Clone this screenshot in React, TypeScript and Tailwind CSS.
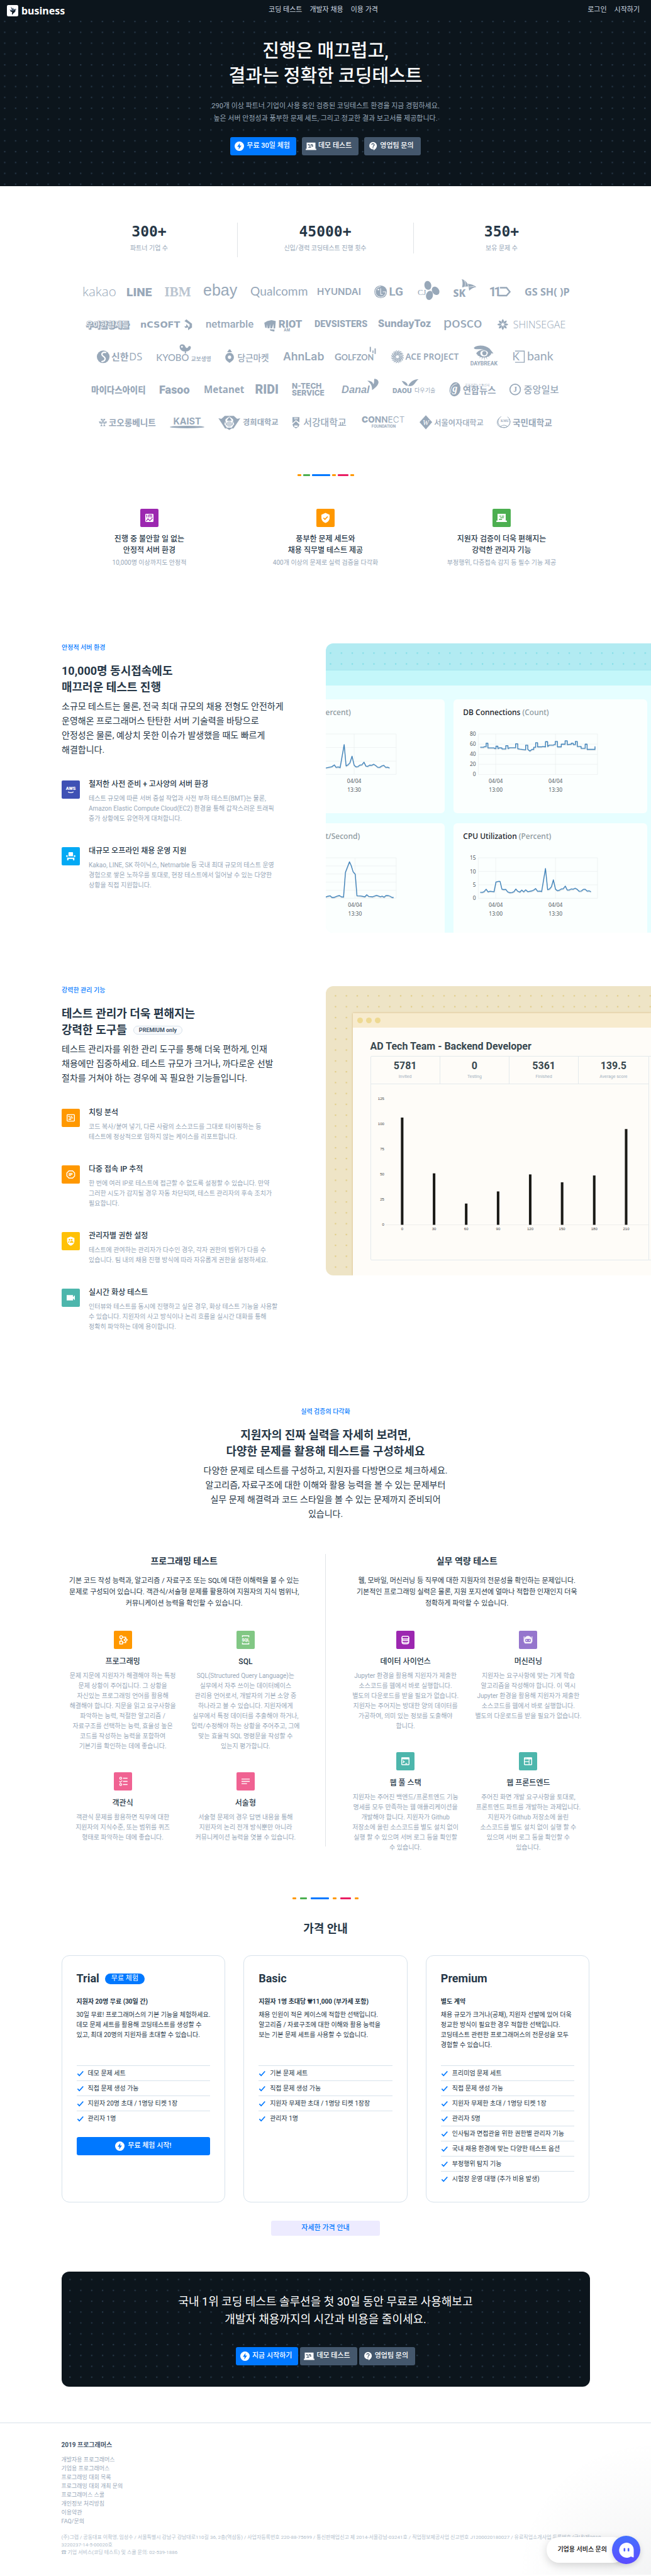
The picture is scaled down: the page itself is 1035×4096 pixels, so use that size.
import React from "react";

type Kids = { children?: React.ReactNode };

const KR = "'Noto Sans CJK KR', sans-serif";
const RB = "Roboto, 'Noto Sans CJK KR', sans-serif";

/* ---------- shared pieces ---------- */

function Dots({ id, color, x, y }: { id: string; color: string; x: number; y: number }) {
  return (
    <svg className="absolute inset-0 h-full w-full" aria-hidden="true">
      <defs>
        <pattern id={id} width="24" height="24" patternUnits="userSpaceOnUse" patternTransform={"scale(0.71875) translate(" + x + " " + y + ")"}>
          <rect x="0" y="0" width="3" height="3" fill={color} />
        </pattern>
      </defs>
      <rect width="100%" height="100%" fill={"url(#" + id + ")"} />
    </svg>
  );
}

function ColorBar({ wide }: { wide?: boolean }) {
  return (
    <div className={"flex h-[3px] justify-center " + (wide ? "gap-[6px]" : "gap-[3px]")}>
      <span className="w-[6px] rounded-[1px] bg-[#ff9800]" />
      <span className="w-[11px] rounded-[1px] bg-[#4caf50]" />
      <span className="w-[29px] rounded-[1px] bg-[#0078ff]" />
      <span className="w-[6px] rounded-[1px] bg-[#ff9800]" />
      <span className="w-[17px] rounded-[1px] bg-[#e91e63]" />
      <span className="w-[6px] rounded-[1px] bg-[#ff9800]" />
    </div>
  );
}

function Tile({ bg, children }: Kids & { bg: string }) {
  return (
    <span className={"block size-[29px] shrink-0 overflow-hidden rounded-[2px] " + bg}>
      <svg viewBox="0 0 40 40" className="h-full w-full" fill="#fff" aria-hidden="true">
        {children}
      </svg>
    </span>
  );
}

function Bolt() {
  return (
    <svg viewBox="0 0 20 20" className="size-[15px]" aria-hidden="true">
      <circle cx="10" cy="10" r="10" fill="#fff" />
      <path d="M11.4 3 5.4 11.3h3.9L8.4 17l6.1-8.3h-4z" fill="#0078ff" />
    </svg>
  );
}
function Receipt() {
  return (
    <svg viewBox="0 0 24 20" className="h-[14px] w-[17px]" fill="#fff" aria-hidden="true">
      <path d="M2 1h20v14h2v3H0v-3h2z" />
      <path d="M5 5h4v2H5zM11 5h5v2h-5zM8 8h3v2H8zM13 8h4v2h-4zM6 11h6v2H6z" fill="#44576c" />
    </svg>
  );
}
function Ask() {
  return (
    <svg viewBox="0 0 20 22" className="h-[15px] w-[14px]" aria-hidden="true">
      <path d="M10 1a9 9 0 0 1 9 9c0 5-4 8.500-7.500 11v-2.500H10A8.700 8.700 0 0 1 10 1z" fill="#fff" />
      <path d="M7.200 7.800a2.800 2.800 0 1 1 4.200 2.400c-.9.600-1.400 1-1.400 2.100" fill="none" stroke="#44576c" strokeWidth="1.900" />
      <rect x="9" y="13.600" width="2" height="2" fill="#44576c" />
    </svg>
  );
}

function Actions({ first, gap }: { first: string; gap: string }) {
  return (
    <div className={"flex justify-center " + gap}>
      <button type="button" className="flex h-[29px] items-center gap-[4px] rounded-[3px] bg-[#0078ff] px-[7px] pr-[10px] text-[11px] font-medium text-white">
        <Bolt />
        {first}
      </button>
      <button type="button" className="flex h-[29px] items-center gap-[3px] rounded-[3px] bg-[#44576c] pr-[11px] pl-[6px] text-[11px] font-medium text-white">
        <Receipt />
        데모 테스트
      </button>
      <button type="button" className="flex h-[29px] items-center gap-[4px] rounded-[3px] bg-[#44576c] pr-[11px] pl-[7px] text-[11px] font-medium text-white">
        <Ask />
        영업팀 문의
      </button>
    </div>
  );
}

/* ---------- partner logos ---------- */

function Logo({ w, label, children }: Kids & { w: number; label: string }) {
  return (
    <svg viewBox={"0 0 " + w + " 150"} width={Math.round(w * 0.24)} height={36} className="shrink overflow-visible" fill="#98a8b9" role="img" aria-label={label}>
      {children}
    </svg>
  );
}

function T({ x = 0, y, s, f = RB, b = 700, mid, italic, fill, children }: Kids & { x?: number; y: number; s: number; f?: string; b?: number; mid?: boolean; italic?: boolean; fill?: string }) {
  return (
    <text x={x} y={y} fontSize={s} fontFamily={f} fontWeight={b} textAnchor={mid ? "middle" : "start"} fontStyle={italic ? "italic" : "normal"} fill={fill}>
      {children}
    </text>
  );
}

const petals = [0, 45, 90, 135, 180, 225, 270, 315];
const blades = [0, 22, 45, 67, 90, 112, 135, 157, 180, 202, 225, 247, 270, 292, 315, 337];
const rays = [-80, -55, -30, -5, 20, 45, 70, 95];

function Partners() {
  const row = "flex h-9 items-center justify-center gap-[22px]";
  return (
    <div className="mx-auto mt-[37px] flex w-full max-w-[840px] flex-col gap-4">
      <div className={row}>
        <Logo w={205} label="kakao"><T y={103} s={86} f="'Open Sans'" b={300}>kakao</T></Logo>
        <Logo w={158} label="LINE"><T x={-4} y={103} s={80} b={900}>LINE</T></Logo>
        <Logo w={163} label="IBM">
          <T x={-2} y={106} s={88} f="'Liberation Serif'" b={700}>IBM</T>
          {[52, 61, 70, 79, 88, 97].map((y) => <rect key={y} x="-4" y={y} width="180" height="3" fill="#fff" />)}
        </Logo>
        <Logo w={220} label="ebay"><T y={100} s={104} f="'Liberation Sans'" b={400}>ebay</T></Logo>
        <Logo w={350} label="Qualcomm"><T y={98} s={80} f="Lato" b={400}>Qualcomm</T></Logo>
        <Logo w={288} label="HYUNDAI"><T y={96} s={63} f="Inter" b={600}>HYUNDAI</T></Logo>
        <Logo w={195} label="LG">
          <circle cx="42" cy="75" r="42" />
          <path d="M42 40A35 35 0 1 0 77 75H56M42 52V93H56" fill="none" stroke="#fff" strokeWidth="4" />
          <circle cx="27" cy="60" r="5" fill="#fff" />
          <T x={98} y={102} s={78}>LG</T>
        </Logo>
        <Logo w={147} label="CJ">
          <T y={94} s={54} f="'Liberation Serif'" b={400}>CJ</T>
          <ellipse cx="68" cy="32" rx="23" ry="30" transform="rotate(-12 68 32)" />
          <ellipse cx="120" cy="68" rx="23" ry="30" transform="rotate(-35 120 68)" />
          <ellipse cx="79" cy="99" rx="23" ry="31" transform="rotate(15 79 99)" />
        </Logo>
        <Logo w={150} label="SK">
          <T x={-2} y={107} s={66} f="'Noto Sans'" b={800}>SK</T>
          <path d="M55-9Q82 0 92 22Q130 25 151 43Q125 48 104 68Q105 50 96 40Q78 38 57 46Q64 15 55-9Z" />
          <path d="M70 0Q86 18 74 44M94 24Q100 38 98 44L140 38" fill="none" stroke="#fff" strokeWidth="3" />
        </Logo>
        <Logo w={138} label="11번가">
          <T x={-6} y={105} s={84}>1</T>
          <T x={26} y={105} s={84}>1</T>
          <path d="M66 48H110L132 75L110 100H56" fill="none" stroke="#98a8b9" strokeWidth="10" />
        </Logo>
        <Logo w={293} label="GS SHOP"><T y={100} s={68} f="'Noto Sans'" b={700}>GS SH( )P</T></Logo>
      </div>

      <div className={row}>
        <Logo w={268} label="우아한형제들">
          <text x="2" y="100" fontSize="52" fontFamily={KR} fontWeight="900" fill="#98a8b9" stroke="#98a8b9" strokeWidth="8">우아한형제들</text>
          <text x="-2" y="95" fontSize="52" fontFamily={KR} fontWeight="900" fill="#fff" stroke="#98a8b9" strokeWidth="2">우아한형제들</text>
        </Logo>
        <Logo w={342} label="NCSOFT">
          <T y={94} s={60} f="'DejaVu Sans'">nCSOFT</T>
          <path d="M306 41L343 70V95L317 113V98L327 88V74L306 60L293 52ZM306 72L322 93L300 98L292 88L304 86Z" />
        </Logo>
        <Logo w={296} label="netmarble"><T y={95} s={70} f="Roboto" b={500}>netmarble</T></Logo>
        <Logo w={240} label="RIOT AM">
          <path d="M0 64L20 52L48 46L76 52L72 100L62 102L60 70L52 100H40L38 72L34 100H22L18 74L16 98L6 96ZM36 106L68 108L66 122L40 116Z" />
          <T x={94} y={97} s={70} b={900}>RIOT</T>
          <T x={150} y={121} s={24} f="Inter" mid>AM</T>
        </Logo>
        <Logo w={331} label="DEVSISTERS"><T y={93} s={60} b={900}>DEVSISTERS</T></Logo>
        <Logo w={341} label="SundayToz"><T y={92} s={64} f="Inter" b={800}>SundayToz</T></Logo>
        <Logo w={262} label="posco"><T y={95} s={98} f="Lato" b={500}>posco</T></Logo>
        <Logo w={455} label="SHINSEGAE">
          {petals.map((a) => <path key={a} d="M39 68Q24 54 39 38Q54 54 39 68" transform={"rotate(" + a + " 39 75)"} />)}
          <T x={107} y={99} s={67} f="'Open Sans'" b={300}>SHINSEGAE</T>
        </Logo>
      </div>

      <div className={row}>
        <Logo w={300} label="신한DS">
          <circle cx="42" cy="72" r="42" />
          <path d="M62 44C36 36 24 56 42 68C62 80 58 102 30 104" fill="none" stroke="#fff" strokeWidth="9" />
          <T x={96} y={97} s={62} f={KR}>신한</T>
          <T x={214} y={96} s={68} f="'Open Sans'" b={500}>DS</T>
        </Logo>
        <Logo w={365} label="KYOBO 교보생명">
          <T y={102} s={62} f="Lato" b={500}>KYOBO</T>
          <T x={232} y={100} s={36} f={KR} b={500}>교보생명</T>
          <path d="M156 8C154-14 186-16 192 2C200 20 208 14 212 8C220-4 232 2 230 12C228 28 212 36 197 37L199 50H189L191 37C172 36 158 26 156 8Z" />
          <circle cx="171" cy="6" r="6" fill="#fff" />
        </Logo>
        <Logo w={290} label="당근마켓">
          <path d="M28 46C46 46 57 60 57 76C57 94 40 104 28 112C16 104 0 94 0 76C0 60 12 46 28 46ZM14 42C12 34 20 34 20 32C22 20 36 20 37 32C40 34 44 36 42 42Z" />
          <circle cx="28" cy="75" r="11" fill="#fff" />
          <T x={80} y={98} s={57} f={KR} b={500}>당근마켓</T>
        </Logo>
        <Logo w={252} label="AhnLab"><T y={97} s={74} f="Inter" b={600}>AhnLab</T></Logo>
        <Logo w={274} label="GOLFZON">
          <T y={95} s={62} f="Lato">G</T>
          <T x={44} y={95} s={53} f="Lato">OLFZON</T>
          <path d="M232 6h8v34h-8zM250 30h7v18h-7zM264 17h8v36h-8z" />
        </Logo>
        <Logo w={431} label="ACE PROJECT">
          {blades.map((a) => <path key={a} d="M50 62C46 48 54 40 64 30C50 30 38 44 46 62Z" transform={"rotate(" + a + " 50 72)"} />)}
          <T x={102} y={92} s={57} f="'Noto Sans'" b={600}>ACE PROJECT</T>
        </Logo>
        <Logo w={203} label="DAYBREAK">
          <path d="M34 12C60-8 110-6 138 18L164 50C150 52 142 46 130 42C110 22 80 20 56 22C46 22 36 20 34 12Z" />
          <path d="M50 50C66 20 120 16 150 50C138 82 76 88 50 50Z" />
          <ellipse cx="102" cy="50" rx="26" ry="20" fill="#fff" />
          <circle cx="104" cy="48" r="14" />
          {rays.map((a) => <path key={a} d="M98 72h6l-3 26z" transform={"rotate(" + a + " 101 50)"} />)}
          <T x={101} y={131} s={36} b={700} mid>DAYBREAK</T>
        </Logo>
        <Logo w={271} label="Kbank">
          <path d="M12 34H73V109H12" fill="none" stroke="#98a8b9" strokeWidth="6" />
          <T x={-6} y={97} s={72} f="Lato" b={400}>K</T>
          <T x={92} y={97} s={82} f="Lato" b={400}>bank</T>
        </Logo>
      </div>

      <div className={row}>
        <Logo w={358} label="마이다스아이티"><T y={96} s={56} f={KR} b={900}>마이다스아이티</T></Logo>
        <Logo w={204} label="Fasoo"><T y={98} s={75} b={900}>Fasoo</T></Logo>
        <Logo w={250} label="Metanet"><T y={94} s={63} f="'Noto Sans'" b={700}>Metanet</T></Logo>
        <Logo w={150} label="RIDI"><T x={-2} y={102} s={82} b={900}>RIDI</T></Logo>
        <Logo w={237} label="N-TECH SERVICE">
          <T y={66} s={50} f="Inter" b={800}>N-TECH</T>
          <T y={113} s={50} f="Inter" b={800}>SERVICE</T>
        </Logo>
        <Logo w={245} label="Danal">
          <T y={95} s={68} f="'Liberation Sans'" italic>Danal</T>
          <path d="M170 15C192 12 206 22 210 38C220 24 212 8 218 1C254 6 258 40 202 76C202 50 196 32 170 15Z" />
        </Logo>
        <Logo w={284} label="DAOU 다우기술">
          <T y={95} s={48} b={900}>DAOU</T>
          <T x={146} y={93} s={38} f={KR} b={400}>다우기술</T>
          <path d="M61 16C85 16 100 32 102 48C80 48 72 30 61 16ZM104 49C115 25 140 2 173 4C150 20 148 48 118 50Z" />
        </Logo>
        <Logo w={308} label="연합뉴스">
          <ellipse cx="39" cy="71" rx="36" ry="47" transform="rotate(12 39 71)" />
          <path d="M12 96C4 60 26 36 52 34" fill="none" stroke="#fff" strokeWidth="4" />
          <T x={22} y={88} s={66} italic fill="#fff" f="'Liberation Serif'">g</T>
          <T x={103} y={48} s={20} f={KR} b={400}>국가기간뉴스통신사</T>
          <T x={90} y={99} s={60} f={KR}>연합뉴스</T>
        </Logo>
        <Logo w={335} label="중앙일보">
          <circle cx="38" cy="72" r="35" fill="none" stroke="#98a8b9" strokeWidth="7" />
          <T x={38} y={88} s={48} f="'Liberation Serif'" mid>J</T>
          <T x={94} y={96} s={64} f={KR} b={500}>중앙일보</T>
        </Logo>
      </div>

      <div className={row}>
        <Logo w={381} label="코오롱베니트">
          <path d="M12 50h14L19 63ZM30 50h14L37 63ZM28 52L35 66H21ZM0 68h15L8 82ZM40 68h15L48 82ZM17 68L24 82H10ZM38 68L45 82H31ZM20 68h15L28 82ZM18 84L26 98H10ZM37 84L45 98H29Z" />
          <T x={66} y={95} s={57} f={KR} b={700}>코오롱베니트</T>
        </Logo>
        <Logo w={228} label="KAIST">
          <T x={114} y={86} s={60} f="Inter" mid>KAIST</T>
          <ellipse cx="114" cy="104" rx="114" ry="8" />
        </Logo>
        <Logo w={398} label="경희대학교">
          <path d="M0 46L20 50L42 30H102L124 50L145 46L100 114H88L72 124L56 114H44Z" />
          <path d="M72 34L96 52L104 84L88 108H56L40 84L48 52Z" fill="#fff" />
          <circle cx="72" cy="84" r="19" opacity="0.5" />
          <path d="M72 40L86 60H58ZM44 62l10 30M100 62L90 92" fill="#98a8b9" stroke="#98a8b9" strokeWidth="4" />
          <T x={162} y={93} s={51} f={KR} b={700}>경희대학교</T>
        </Logo>
        <Logo w={367} label="서강대학교">
          <path d="M0 38H46V74L23 58L0 78ZM0 88L23 66L46 88L40 102L23 114L6 102Z" />
          <path d="M12 88L18 98L23 88L28 98L34 88V104H12Z" fill="#fff" />
          <T x={23} y={54} s={15} mid fill="#fff" f="'Liberation Serif'">IHS</T>
          <T x={72} y={96} s={62} f={KR} b={500}>서강대학교</T>
        </Logo>
        <Logo w={292} label="CONNECT FOUNDATION">
          <text x="0" y="74" fontSize="57" fontFamily="Inter">
            <tspan fontWeight="900">C</tspan><tspan fontWeight="800">O</tspan><tspan fontWeight="700">N</tspan><tspan fontWeight="600">N</tspan><tspan fontWeight="400">E</tspan><tspan fontWeight="300">CT</tspan>
          </text>
          <T x={146} y={110} s={24} f="Inter" mid>FOUNDATION</T>
        </Logo>
        <Logo w={426} label="서울여자대학교">
          <path d="M42 26L84 72L42 120L0 72Z" />
          <T x={42} y={92} s={50} mid fill="#fff" italic f="'Liberation Serif'" b={400}>W</T>
          <T x={97} y={94} s={51} f={KR} b={500}>서울여자대학교</T>
        </Logo>
        <Logo w={363} label="국민대학교">
          <path d="M24 34A40 40 0 1 0 66 36M14 44A34 34 0 0 0 40 106M76 50A36 36 0 0 1 40 106M20 100Q42 84 66 100" fill="none" stroke="#98a8b9" strokeWidth="4" />
          <T x={48} y={69} s={22} mid f="'Liberation Serif'">KMU</T>
          <T x={100} y={95} s={57} f={KR} b={700}>국민대학교</T>
        </Logo>
      </div>
    </div>
  );
}

/* ---------- feature sections ---------- */

function Heading({ label, children, text, center }: Kids & { label: string; text: string; center?: boolean }) {
  return (
    <div className={center ? "text-center" : ""}>
      <p className="text-[10px] leading-[14px] font-medium text-[#0078ff]">{label}</p>
      <h2 className="mt-[17px] text-[18px] leading-[26px] font-bold whitespace-pre-line text-[#263747]">{children}</h2>
      <p className="mt-[6px] text-[14px] leading-[23px] whitespace-pre-line text-[#263747]">{text}</p>
    </div>
  );
}

function Item({ bg, icon, title, text }: { bg: string; icon: React.ReactNode; title: string; text: string }) {
  return (
    <li className="flex items-start gap-[14px]">
      <Tile bg={bg}>{icon}</Tile>
      <div>
        <h3 className="text-[12px] leading-[12px] font-medium text-[#263747]">{title}</h3>
        <p className="mt-[9px] text-[10px] leading-[16px] whitespace-pre-line text-[#98a8b9]">{text}</p>
      </div>
    </li>
  );
}

const chartRatio = 0.973;

function ServerChart({ view, ys, xs, left, right, top, bottom, pts, labels }: { view: string; ys: number[]; xs: { x: number; t: string }[]; left: number; right: number; top: number; bottom: number; pts: string; labels?: string[] }) {
  return (
    <svg viewBox={view} className="block w-full" fontFamily="'Noto Sans'" fontSize="25" fill="#545b64">
      <g transform={"scale(1 " + chartRatio + ")"} fill="none">
        {ys.map((y) => <path key={y} d={"M" + left + " " + y + "H" + right} stroke="#e9edee" strokeWidth="2" />)}
        {xs.map((v) => <path key={v.x} d={"M" + v.x + " " + top + "V" + bottom} stroke="#e9edee" strokeWidth="2" />)}
        <path d={"M" + right + " " + top + "V" + bottom} stroke="#e9edee" strokeWidth="2" />
        {labels && <path d={"M" + left + " " + top + "V" + bottom} stroke="#e9edee" strokeWidth="2" />}
        <polyline points={pts} transform="translate(1 4)" stroke="#d9dfe2" strokeWidth="4" />
        <polyline points={pts} stroke="#3f83bb" strokeWidth="4" strokeLinejoin="round" />
      </g>
      {labels && labels.map((l, i) => <text key={l} x="749" y={ys[i] * chartRatio + 9} textAnchor="end">{l}</text>)}
      {xs.map((v) => (
        <g key={v.x} textAnchor="middle">
          <text x={v.x} y={(bottom + 41) * chartRatio}>04/04</text>
          <text x={v.x} y={(bottom + 85) * chartRatio}>{v.t}</text>
        </g>
      ))}
    </svg>
  );
}

const dbPts = "769,590 785,590 788,587 797,587 797,570 805,570 805,593 833,593 838,596 843,596 843,585 852,585 852,596 861,592 871,593 871,598 889,598 889,582 899,582 899,596 908,592 935,592 935,573 945,573 945,597 955,599 978,602 982,602 982,580 992,580 992,600 1002,608 1012,600 1020,600 1020,590 1029,590 1029,568 1038,568 1038,588 1058,588 1062,586 1075,588 1075,563 1085,563 1085,586 1093,580 1112,580 1115,577 1121,577 1121,562 1131,562 1131,588 1149,588 1149,575 1167,575 1167,559 1177,559 1177,577 1196,575 1196,570 1205,570 1205,577 1215,577 1215,562 1224,562 1224,586 1242,586 1242,595 1261,595 1261,575 1270,575 1270,600 1307,600 1307,586";
const cpuPts = "769,1289 779,1289 787,1286 797,1274 806,1287 815,1284 834,1286 843,1239 855,1236 862,1236 871,1274 880,1276 889,1275 898,1287 908,1291 918,1290 927,1286 936,1273 945,1284 955,1288 964,1278 973,1287 982,1277 992,1286 1012,1282 1020,1278 1029,1271 1038,1284 1048,1283 1057,1285 1075,1174 1085,1276 1094,1273 1103,1262 1112,1229 1122,1274 1131,1281 1140,1279 1149,1273 1158,1272 1168,1259 1177,1278 1186,1278 1196,1273 1205,1274 1214,1269 1224,1275 1233,1284 1243,1283 1252,1275 1261,1274 1270,1283 1280,1282 1288,1286";
const leftA = "42,690 70,684 82,675 90,687 100,685 109,688 128,577 137,680 146,675 155,665 165,633 175,677 184,685 193,683 202,676 211,675 221,662 230,681 239,682 248,676 257,677 267,672 277,679 286,687 295,687 305,680 314,677 323,687 332,686 341,690";
const leftB = "42,1312 53,1308 62,1306 71,1314 81,1314 97,1307 106,1305 115,1311 125,1312 134,1193 153,1142 161,1160 170,1190 180,1202 188,1306 206,1307 225,1311 234,1301 243,1309 262,1311 280,1304 298,1311 307,1308 315,1313 324,1305 335,1305 343,1308 353,1314 360,1314";

function ServerPanel() {
  const title = "pt-[13px] font-['Noto_Sans'] text-[12px] leading-[16px] font-medium text-[#16191f]";
  return (
    <div className="h-[460px] overflow-hidden rounded-l-[12px] bg-[#e6feff]">
      <div className="relative h-[43px] border-b border-[#a5e7ef] bg-[#b2ebf2]">
        <Dots id="dots-cyan" color="#80dde6" x={9} y={20} />
      </div>
      <div className="h-[24px] bg-[#c4f7fa]" />
      <div className="mt-[22px] grid grid-cols-[190fr_308fr] grid-rows-[181px_174px] gap-x-[14px] gap-y-[16px] pr-[6px]">
        <div className="overflow-hidden rounded-r-[6px] bg-[#fbfffe]">
          <p className={title}><span className="text-[#8d999e]">ercent)</span></p>
          <ServerChart view="42 435 560 440" ys={[526, 591, 657, 721]} xs={[{ x: 175, t: "13:30" }]} left={40} right={372} top={526} bottom={721} pts={leftA} />
        </div>
        <div className="overflow-hidden rounded-[6px] bg-[#fbfffe]">
          <p className={title + " pl-[15px]"}>DB Connections <span className="text-[#8d999e]">(Count)</span></p>
          <ServerChart view="644 435 907 440" ys={[526, 575, 624, 672, 721]} xs={[{ x: 842, t: "13:00" }, { x: 1122, t: "13:30" }]} left={760} right={1319} top={526} bottom={721} pts={dbPts} labels={["80", "60", "40", "20", "0"]} />
        </div>
        <div className="overflow-hidden rounded-tr-[6px] bg-[#fbfffe]">
          <p className={title}><span className="text-[#8d999e]">t/Second)</span></p>
          <ServerChart view="42 1016 560 410" ys={[1123, 1162, 1201, 1240, 1279, 1318]} xs={[{ x: 179, t: "13:30" }]} left={40} right={372} top={1123} bottom={1318} pts={leftB} />
        </div>
        <div className="overflow-hidden rounded-t-[6px] bg-[#fbfffe]">
          <p className={title + " pl-[15px]"}>CPU Utilization <span className="text-[#8d999e]">(Percent)</span></p>
          <ServerChart view="644 1016 907 410" ys={[1123, 1188, 1253, 1318]} xs={[{ x: 842, t: "13:00" }, { x: 1122, t: "13:30" }]} left={760} right={1319} top={1123} bottom={1318} pts={cpuPts} labels={["15", "10", "5", "0"]} />
        </div>
      </div>
    </div>
  );
}

const scoreBars = [
  { x: 400, y: 703, t: "0" },
  { x: 550, y: 965, t: "30" },
  { x: 701, y: 1107, t: "60" },
  { x: 851, y: 1050, t: "90" },
  { x: 1002, y: 970, t: "120" },
  { x: 1152, y: 1007, t: "150" },
  { x: 1303, y: 975, t: "180" },
  { x: 1453, y: 757, t: "210" },
];
const scoreTicks = [
  { y: 614, t: "125" },
  { y: 733, t: "100" },
  { y: 851, t: "75" },
  { y: 970, t: "50" },
  { y: 1088, t: "25" },
  { y: 1206, t: "0" },
];
const scoreStats = [
  ["5781", "Invited"],
  ["0", "Testing"],
  ["5361", "Finished"],
  ["139.5", "Average score"],
];

function ScorePanel() {
  return (
    <div className="relative h-[460px] overflow-hidden rounded-l-[12px] bg-[#eee4c6] pt-[43px] pl-[43px]">
      <Dots id="dots-sand" color="#e0cc85" x={20} y={20} />
      <div className="relative h-[417px] bg-[#fefcf8] shadow-[0_0_3px_#d8b77c]">
        <div className="flex h-[23px] items-center gap-[5px] bg-[#f7ebce] pl-[7px]">
          <span className="size-[9px] rounded-full bg-[#eed992]" />
          <span className="size-[9px] rounded-full bg-[#eed992]" />
          <span className="size-[9px] rounded-full bg-[#eed992]" />
        </div>
        <div className="pt-[20px] pl-[28px]">
          <h3 className="text-[16px] leading-[20px] font-bold text-[#37474f]">AD Tech Team - Backend Developer</h3>
          <div className="mt-[5px] flex">
            <div className="w-[443px] rounded-l-[2px] border border-[#e3e9ec]">
              <dl className="grid h-[44px] grid-cols-4 divide-x divide-[#e3e9ec] border-b border-[#e3e9ec] text-center">
                {scoreStats.map(([n, l]) => (
                  <div key={l} className="flex flex-col-reverse justify-end pt-[6px]">
                    <dt className="mt-px text-[7px] leading-[14px] text-[#a3b1be]">{l}</dt>
                    <dd className="text-[16px] leading-[18px] font-bold text-[#37474f]">{n}</dd>
                  </div>
                ))}
              </dl>
              <svg viewBox="254 546 1304 824" className="block w-full" fontFamily="'Liberation Sans'" fontSize="18" fill="#444">
                {scoreTicks.map((v) => <text key={v.t} x="316" y={v.y + 6} textAnchor="end">{v.t}</text>)}
                <path d="M322 1207H1558" stroke="#e6e6e6" strokeWidth="2" />
                {scoreBars.map((v) => (
                  <g key={v.t}>
                    <path d={"M" + v.x + " " + v.y + "V1207"} stroke="#1a1a17" strokeWidth="12" />
                    <text x={v.x} y="1233" textAnchor="middle">{v.t}</text>
                  </g>
                ))}
              </svg>
            </div>
            <div className="flex-1 border-y border-[#e3e9ec]" />
          </div>
        </div>
      </div>
    </div>
  );
}

/* ---------- icon drawings on a 40-unit tile ---------- */

const icons = {
  stats: (
    <g>
      <rect x="11" y="11" width="18" height="18" rx="2" />
      <path d="M14.500 13v6M13 14h1.500M18.500 19v-5.500h6.500V19M21.700 13.500V19" fill="none" stroke="#9c27b0" strokeWidth="1.600" />
      <path d="M13 27l4-5 4 4 6-6" fill="none" stroke="#9c27b0" strokeWidth="1.800" />
    </g>
  ),
  shield: (
    <g>
      <path d="M20 9l9 4v7c0 5-4 9.500-9 11-5-1.500-9-6-9-11v-7z" />
      <path d="M15.500 20l3.300 3.300 6-6.500" fill="none" stroke="#ff9800" strokeWidth="2.200" />
    </g>
  ),
  paper: (
    <g>
      <path d="M11 11h18v15h2.500v3h-23v-3H11z" />
      <path d="M15 15h4v2h-4zM20.500 15h5v2h-5zM17 18.500h8v2h-8zM14 22h7v2h-7z" fill="#4caf50" />
    </g>
  ),
  aws: (
    <g>
      <text x="20" y="21" textAnchor="middle" fontSize="10" fontWeight="900" fontFamily="Roboto">AWS</text>
      <path d="M14 25q6 3.500 12 0" fill="none" stroke="#fff" strokeWidth="1.700" />
    </g>
  ),
  seat: <path d="M15 12.500q0-1.500 1.500-1.500h7q1.500 0 1.500 1.500V20H15zM10 18h3.200v3.500H10zM26.800 18H30v3.500h-3.200zM12 23h16v6h-3v-3H15v3h-3z" />,
  cheat: (
    <g>
      <rect x="12" y="13" width="16" height="14" rx="1" fill="none" stroke="#fff" strokeWidth="1.900" />
      <path d="M14.500 16h4v2h-4zM20 16h3v2h-3zM17 19h8v2h-8zM15 22h6v2h-6z" />
    </g>
  ),
  ip: (
    <g>
      <path d="M16 12h8l4.500 4.500v7L24 28h-8l-4.500-4.500v-7z" fill="none" stroke="#fff" strokeWidth="2" />
      <text x="20" y="23.500" textAnchor="middle" fontSize="9.500" fontWeight="900" fontFamily="Roboto">IP</text>
    </g>
  ),
  people: (
    <g>
      <path d="M20 10l8 3v6.500c0 5-3.500 8.700-8 10.500-4.500-1.800-8-5.500-8-10.500V13z" />
      <g fill="#ffc107">
        <circle cx="17.200" cy="16.800" r="1.700" /><circle cx="22" cy="16.800" r="1.700" />
        <path d="M14.200 23.500q0-3.800 3.600-3.800-1.500 1.200-1.300 3.800zM18 23.500q0-3.800 4-3.800t4 3.800z" />
      </g>
    </g>
  ),
  video: <path d="M11 14h14v4.500l4-4v11l-4-4V26H11z" />,
  flow: (
    <g fill="none" stroke="#fff" strokeWidth="2">
      <circle cx="16" cy="14" r="3" /><rect x="13" y="23" width="6" height="6" />
      <path d="M16 17v6M19 14h7v2.500M26 16.500l3.500 3.500-3.500 3.500-3.500-3.500zM26 23.500V26h-7" />
    </g>
  ),
  sql: (
    <g>
      <path d="M13 14v-3h14v3M13 26v3h14v-3" fill="none" stroke="#fff" strokeWidth="2" />
      <text x="20" y="23.500" textAnchor="middle" fontSize="9" fontWeight="900" fontFamily="Roboto">SQL</text>
    </g>
  ),
  choice: (
    <g>
      <path d="M20 12h10v2H20zM20 19h10v2H20zM20 26h10v2H20z" />
      <g fill="none" stroke="#fff" strokeWidth="1.700"><circle cx="15" cy="13" r="2.200" /><path d="M12 19.500l2.400 2.500 3.800-4" /><circle cx="15" cy="27" r="2.200" /></g>
    </g>
  ),
  lines: <path d="M11 14h18v2H11zM11 19h18v2H11zM11 24h12v2H11z" />,
  data: (
    <g fill="none" stroke="#fff" strokeWidth="2">
      <rect x="12.500" y="12" width="15" height="6" rx="3" />
      <path d="M12.500 15v9.500q0 4 4 4h7q4 0 4-4V15M12.500 18.500q1 3 4 3h7q3 0 4-3M12.500 23q1 3 4 3h7q3 0 4-3" />
    </g>
  ),
  robot: (
    <g>
      <path d="M20 11q8.500 1 8.500 10v3q0 4-4 4h-9q-4 0-4-4v-3q0-9 8.500-10z" opacity="0.900" />
      <path d="M10.500 12.500h1.500V24h-1.500zM28 12.500h1.500V24H28z" />
      <rect x="14" y="18" width="12" height="6.500" rx="2" fill="#9575cd" />
      <circle cx="17" cy="21" r="1.200" /><circle cx="23" cy="21" r="1.200" />
    </g>
  ),
  terminal: (
    <g>
      <rect x="12" y="12.500" width="16" height="15" rx="1" fill="none" stroke="#fff" strokeWidth="2" />
      <path d="M11 12h18v4H11z" />
      <path d="M14.500 18.500l3 2.500-3 2.500M20 25h4" fill="none" stroke="#fff" strokeWidth="1.900" />
    </g>
  ),
  front: (
    <g>
      <rect x="12" y="12.500" width="16" height="15" rx="1" fill="none" stroke="#fff" strokeWidth="2" />
      <path d="M12 12h16v4H12zM21.500 16h1.600v11h-1.600zM12 20h10v1.600H12z" />
      <path d="M13.500 13h1.300v1.300h-1.300zM16 13h1.300v1.300H16z" fill="#4db6ac" />
    </g>
  ),
};

const highlights = [
  { bg: "bg-[#9c27b0]", icon: icons.stats, title: "진행 중 불안할 일 없는\n안정적 서버 환경", text: "10,000명 이상까지도 안정적" },
  { bg: "bg-[#ff9800]", icon: icons.shield, title: "풍부한 문제 세트와\n채용 직무별 테스트 제공", text: "400개 이상의 문제로 실력 검증을 다각화" },
  { bg: "bg-[#4caf50]", icon: icons.paper, title: "지원자 검증이 더욱 편해지는\n강력한 관리자 기능", text: "부정행위, 다중접속 감지 등 필수 기능 제공" },
];

function TestKind({ bg, icon, title, text }: { bg: string; icon: React.ReactNode; title: string; text: string }) {
  return (
    <li className="flex flex-col items-center text-center">
      <Tile bg={bg}>{icon}</Tile>
      <h4 className="mt-3 text-[12px] leading-[16px] font-medium text-[#263747]">{title}</h4>
      <p className="mt-[7px] text-[10px] leading-[16px] whitespace-pre text-[#98a8b9]">{text}</p>
    </li>
  );
}

const testColumns = [
  {
    title: "프로그래밍 테스트",
    text: "기본 코드 작성 능력과, 알고리즘 / 자료구조 또는 SQL에 대한 이해력을 볼 수 있는\n문제로 구성되어 있습니다. 객관식/서술형 문제를 활용하여 지원자의 지식 범위나,\n커뮤니케이션 능력을 확인할 수 있습니다.",
    kinds: [
      { bg: "bg-[#ff9800]", icon: icons.flow, title: "프로그래밍", text: "문제 지문에 지원자가 해결해야 하는 특정\n문제 상황이 주어집니다. 그 상황을\n자신있는 프로그래밍 언어를 활용해\n해결해야 합니다. 지문을 읽고 요구사항을\n파악하는 능력, 적절한 알고리즘 /\n자료구조를 선택하는 능력, 효율성 높은\n코드를 작성하는 능력을 포함하여\n기본기를 확인하는 데에 좋습니다." },
      { bg: "bg-[#81c784]", icon: icons.sql, title: "SQL", text: "SQL(Structured Query Language)는\n실무에서 자주 쓰이는 데이터베이스\n관리용 언어로서, 개발자의 기본 소양 중\n하나라고 볼 수 있습니다. 지원자에게\n실무에서 특정 데이터를 추출해야 하거나,\n입력/수정해야 하는 상황을 주어주고, 그에\n맞는 효율적 SQL 명령문을 작성할 수\n있는지 평가합니다." },
      { bg: "bg-[#f06292]", icon: icons.choice, title: "객관식", text: "객관식 문제를 활용하면 직무에 대한\n지원자의 지식수준, 또는 범위를 퀴즈\n형태로 파악하는 데에 좋습니다." },
      { bg: "bg-[#f06292]", icon: icons.lines, title: "서술형", text: "서술형 문제의 경우 답변 내용을 통해\n지원자의 논리 전개 방식뿐만 아니라\n커뮤니케이션 능력을 엿볼 수 있습니다." },
    ],
  },
  {
    title: "실무 역량 테스트",
    text: "웹, 모바일, 머신러닝 등 직무에 대한 지원자의 전문성을 확인하는 문제입니다.\n기본적인 프로그래밍 실력은 물론, 지원 포지션에 얼마나 적합한 인재인지 더욱\n정확하게 파악할 수 있습니다.",
    kinds: [
      { bg: "bg-[#9c27b0]", icon: icons.data, title: "데이터 사이언스", text: "Jupyter 환경을 활용해 지원자가 제출한\n소스코드를 웹에서 바로 실행합니다.\n별도의 다운로드를 받을 필요가 없습니다.\n지원자는 주어지는 방대한 양의 데이터를\n가공하여, 의미 있는 정보를 도출해야\n합니다." },
      { bg: "bg-[#9575cd]", icon: icons.robot, title: "머신러닝", text: "지원자는 요구사항에 맞는 기계 학습\n알고리즘을 작성해야 합니다. 이 역시\nJupyter 환경을 활용해 지원자가 제출한\n소스코드를 웹에서 바로 실행합니다.\n별도의 다운로드를 받을 필요가 없습니다." },
      { bg: "bg-[#4db6ac]", icon: icons.terminal, title: "웹 풀 스택", text: "지원자는 주어진 백엔드/프론트엔드 기능\n명세를 모두 만족하는 웹 애플리케이션을\n개발해야 합니다. 지원자가 Github\n저장소에 올린 소스코드를 별도 설치 없이\n실행 할 수 있으며 서버 로그 등을 확인할\n수 있습니다." },
      { bg: "bg-[#4db6ac]", icon: icons.front, title: "웹 프론트엔드", text: "주어진 화면 개발 요구사항을 토대로,\n프론트엔드 파트를 개발하는 과제입니다.\n지원자가 Github 저장소에 올린\n소스코드를 별도 설치 없이 실행 할 수\n있으며 서버 로그 등을 확인할 수\n있습니다." },
    ],
  },
];

function TestColumn({ col }: { col: (typeof testColumns)[number] }) {
  return (
    <div className="text-center">
      <h3 className="text-[14px] leading-[22px] font-bold text-[#263747]">{col.title}</h3>
      <p className="mt-3 text-[11px] leading-[18px] whitespace-pre-line text-[#263747]">{col.text}</p>
      <ul className="mt-[34px] grid grid-cols-2 gap-y-[33px]">
        {col.kinds.map((k) => <TestKind key={k.title} {...k} />)}
      </ul>
    </div>
  );
}

const plans = [
  { name: "Trial", trial: true, price: "지원자 20명 무료 (30일 간)", text: "30일 무료! 프로그래머스의 기본 기능을 체험하세요.\n데모 문제 세트를 활용해 코딩테스트를 생성할 수\n있고, 최대 20명의 지원자를 초대할 수 있습니다.", list: ["데모 문제 세트", "직접 문제 생성 가능", "지원자 20명 초대 / 1명당 티켓 1장", "관리자 1명"] },
  { name: "Basic", trial: false, price: "지원자 1명 초대당 ₩11,000 (부가세 포함)", text: "채용 인원이 적은 케이스에 적합한 선택입니다.\n알고리즘 / 자료구조에 대한 이해와 활용 능력을\n보는 기본 문제 세트를 사용할 수 있습니다.", list: ["기본 문제 세트", "직접 문제 생성 가능", "지원자 무제한 초대 / 1명당 티켓 1장장", "관리자 1명"] },
  { name: "Premium", trial: false, price: "별도 계약", text: "채용 규모가 크거나(공채), 지원자 선발에 있어 더욱\n정교한 방식이 필요한 경우 적합한 선택입니다.\n코딩테스트 관련한 프로그래머스의 전문성을 모두\n경험할 수 있습니다.", list: ["프리미엄 문제 세트", "직접 문제 생성 가능", "지원자 무제한 초대 / 1명당 티켓 1장", "관리자 5명", "인사팀과 면접관을 위한 권한별 관리자 기능", "국내 채용 환경에 맞는 다양한 테스트 옵션", "부정행위 탐지 기능", "시험장 운영 대행 (추가 비용 발생)"] },
];

const footerLinks = ["개발자용 프로그래머스", "기업용 프로그래머스", "프로그래밍 대회 목록", "프로그래밍 대회 개최 문의", "프로그래머스 스쿨", "개인정보 처리방침", "이용약관", "FAQ/문의"];

export default function App() {
  return (
    <div className="relative overflow-hidden bg-white font-[family-name:Roboto,'Noto_Sans_CJK_KR',sans-serif] text-[#263747]">
      <header className="relative bg-[#0c151c] pb-[49px] text-center">
        <Dots id="dots-hero" color="#263747" x={9} y={22} />
        <nav className="relative grid h-[33px] grid-cols-3 items-center bg-[#0c151c] pr-[18px] pl-[11px] text-[11px] text-[#cfd9e2]">
          <a href="#" className="flex items-center gap-[5px] text-white">
            <svg viewBox="0 0 24 24" className="size-[18px]" aria-hidden="true">
              <rect width="24" height="24" rx="3" fill="#fff" />
              <path d="M5.500 9.500l5 1.500L8 3.500l4.500 4.500.5-3 2 5q1-3 3.500-1.500l2.500.7-2.700.8q.5 4.500-3.300 6.500-2.500 1.300-3.500 4.500-1.700-3-.2-6-3.800-2-5.800-5.500z" fill="#44576c" />
              <path d="M6.500 12l7 1 3-3.500q1.500 3.500-1.500 6-2.500 1.300-3.500 5-1.500-2.500 0-5.500-3.500-.5-5-3z" fill="#0c151c" />
            </svg>
            <span className="font-['Noto_Sans'] text-[16px] leading-[20px] font-bold">business</span>
          </a>
          <div className="flex justify-center gap-3">
            <a href="#">코딩 테스트</a>
            <a href="#">개발자 채용</a>
            <a href="#">이용 가격</a>
          </div>
          <div className="flex justify-end gap-3">
            <a href="#">로그인</a>
            <a href="#">시작하기</a>
          </div>
        </nav>
        <div className="relative pt-[28px]">
          <h1 className="text-[29px] leading-[40px] font-medium text-white">
            진행은 매끄럽고,
            <br />
            결과는 정확한 코딩테스트
          </h1>
          <p className="mt-[18px] mb-[19px] text-[11px] leading-[20px] text-[#98a8b9]">
            290개 이상 파트너 기업이 사용 중인 검증된 코딩테스트 환경을 지금 경험하세요.
            <br />
            높은 서버 안정성과 풍부한 문제 세트, 그리고 정교한 결과 보고서를 제공합니다.
          </p>
          <Actions first="무료 30일 체험" gap="gap-[9px]" />
        </div>
      </header>

      <main>
        <section className="pt-[58px]">
          <dl className="mx-auto grid h-[55px] w-full max-w-[840px] grid-cols-3 items-start text-center">
            {[
              ["300+", "파트너 기업 수", "h-[55px] border-r"],
              ["45000+", "신입/경력 코딩테스트 진행 횟수", "h-[49px] border-r"],
              ["350+", "보유 문제 수", "h-[49px]"],
            ].map(([n, l, c]) => (
              <div key={l} className={"flex flex-col-reverse justify-end border-[#e0e3e6] " + c}>
                <dt className="mt-[5px] text-[10px] leading-[16px] text-[#98a8b9]">{l}</dt>
                <dd className="font-['DejaVu_Sans_Mono'] text-[23px] leading-[28px] font-bold">{n}</dd>
              </div>
            ))}
          </dl>
          <Partners />
          <div className="mt-16">
            <ColorBar />
          </div>
          <ul className="mx-auto mt-[52px] grid w-full max-w-[840px] grid-cols-3">
            {highlights.map((h) => (
              <li key={h.text} className="flex flex-col items-center text-center">
                <Tile bg={h.bg}>{h.icon}</Tile>
                <h3 className="mt-[10px] text-[12px] leading-[18px] font-medium whitespace-pre-line">{h.title}</h3>
                <p className="mt-[3px] text-[10px] leading-[16px] text-[#98a8b9]">{h.text}</p>
              </li>
            ))}
          </ul>
        </section>

        <section className="mt-[120px] grid grid-cols-2 items-start">
          <div className="pl-[98px]">
            <Heading label="안정적 서버 환경" text={"소규모 테스트는 물론, 전국 최대 규모의 채용 전형도 안전하게\n운영해온 프로그래머스 탄탄한 서버 기술력을 바탕으로\n안정성은 물론, 예상치 못한 이슈가 발생했을 때도 빠르게\n해결합니다."}>
              {"10,000명 동시접속에도\n매끄러운 테스트 진행"}
            </Heading>
            <ul className="mt-[37px] flex flex-col gap-[37px]">
              <Item bg="bg-[#3f51b5]" icon={icons.aws} title="철저한 사전 준비 + 고사양의 서버 환경" text={"테스트 규모에 따른 서버 증설 작업과 사전 부하 테스트(BMT)는 물론,\nAmazon Elastic Compute Cloud(EC2) 환경을 통해 갑작스러운 트래픽\n증가 상황에도 유연하게 대처합니다."} />
              <Item bg="bg-[#03a9f4]" icon={icons.seat} title="대규모 오프라인 채용 운영 지원" text={"Kakao, LINE, SK 하이닉스, Netmarble 등 국내 최대 규모의 테스트 운영\n경험으로 쌓은 노하우를 토대로, 현장 테스트에서 일어날 수 있는 다양한\n상황을 직접 지원합니다."} />
            </ul>
          </div>
          <ServerPanel />
        </section>

        <section className="mt-[85px] grid grid-cols-2 items-start">
          <div className="pl-[98px]">
            <Heading label="강력한 관리 기능" text={"테스트 관리자를 위한 관리 도구를 통해 더욱 편하게, 인재\n채용에만 집중하세요. 테스트 규모가 크거나, 까다로운 선발\n절차를 거쳐야 하는 경우에 꼭 필요한 기능들입니다."}>
              <span className="block">테스트 관리가 더욱 편해지는</span>
              <span className="flex h-[26px] items-center gap-[10px]">
                <span>강력한 도구들</span>
                <span className="rounded-full border border-[#d7e2eb] bg-[#fafbfd] px-[8px] text-[9px] leading-[12px] font-bold text-[#44576c]">PREMIUM only</span>
              </span>
            </Heading>
            <ul className="mt-[37px] flex flex-col gap-[37px]">
              <Item bg="bg-[#ff9800]" icon={icons.cheat} title="치팅 분석" text={"코드 복사/붙여 넣기, 다른 사람의 소스코드를 그대로 타이핑하는 등\n테스트에 정상적으로 임하지 않는 케이스를 리포트합니다."} />
              <Item bg="bg-[#ff9800]" icon={icons.ip} title="다중 접속 IP 추적" text={"한 번에 여러 IP로 테스트에 접근할 수 없도록 설정할 수 있습니다. 만약\n그러한 시도가 감지될 경우 자동 차단되며, 테스트 관리자의 후속 조치가\n필요합니다."} />
              <Item bg="bg-[#ffc107]" icon={icons.people} title="관리자별 권한 설정" text={"테스트에 관여하는 관리자가 다수인 경우, 각자 권한의 범위가 다를 수\n있습니다. 팀 내의 채용 진행 방식에 따라 자유롭게 권한을 설정하세요."} />
              <Item bg="bg-[#4db6ac]" icon={icons.video} title="실시간 화상 테스트" text={"인터뷰와 테스트를 동시에 진행하고 싶은 경우, 화상 테스트 기능을 사용할\n수 있습니다. 지원자의 사고 방식이나 논리 흐름을 실시간 대화를 통해\n정확히 파악하는 데에 용이합니다."} />
            </ul>
          </div>
          <ScorePanel />
        </section>

        <section className="mx-auto mt-[120px] w-full max-w-[840px]">
          <Heading center label="실력 검증의 다각화" text={"다양한 문제로 테스트를 구성하고, 지원자를 다방면으로 체크하세요.\n알고리즘, 자료구조에 대한 이해와 활용 능력을 볼 수 있는 문제부터\n실무 문제 해결력과 코드 스타일을 볼 수 있는 문제까지 준비되어\n있습니다."}>
            {"지원자의 진짜 실력을 자세히 보려면,\n다양한 문제를 활용해 테스트를 구성하세요"}
          </Heading>
          <div className="mt-[52px] grid grid-cols-[1fr_1px_1fr] gap-x-[29px]">
            <TestColumn col={testColumns[0]} />
            <div className="mb-[10px] bg-[#e0e3e6]" />
            <TestColumn col={testColumns[1]} />
          </div>
        </section>

        <section className="mx-auto mt-[71px] w-full max-w-[840px]">
          <ColorBar wide />
          <h2 className="mt-[34px] text-center text-[18px] leading-[26px] font-bold">가격 안내</h2>
          <div className="mt-[29px] grid grid-cols-3 gap-[29px]">
            {plans.map((p) => (
              <article key={p.name} className="rounded-[12px] border border-[#d7e2eb] px-[23px] pt-[24px] pb-[25px]">
                <div className="flex h-6 items-center gap-[9px]">
                  <h3 className="text-[18px] leading-[24px] font-bold">{p.name}</h3>
                  {p.trial && <span className="h-[17px] rounded-full bg-[#0078ff] px-[10px] text-[11px] leading-[16px] text-white">무료 체험</span>}
                </div>
                <p className="mt-[17px] text-[10px] leading-[16px] font-bold">{p.price}</p>
                <p className="mt-[5px] min-h-[64px] text-[10px] leading-[16px] whitespace-pre">{p.text}</p>
                <ul className="mt-[24px]">
                  {p.list.map((t) => (
                    <li key={t} className="flex h-6 items-center gap-[6px] border-t border-[#d7e2eb] text-[10px] leading-[16px]">
                      <svg viewBox="0 0 16 14" className="h-[10px] w-[12px]" aria-hidden="true">
                        <path d="M1.500 7.500l4 4L14 2" fill="none" stroke="#0078ff" strokeWidth="2.300" />
                      </svg>
                      {t}
                    </li>
                  ))}
                </ul>
                {p.trial && (
                  <button type="button" className="mt-[18px] flex h-[29px] w-full items-center justify-center gap-[5px] rounded-[3px] bg-[#0078ff] text-[11px] font-medium text-white">
                    <Bolt />
                    무료 체험 시작!
                  </button>
                )}
              </article>
            ))}
          </div>
          <a href="#" className="mx-auto mt-[29px] block h-6 w-[173px] rounded-[3px] bg-[#edebff] text-center text-[11px] leading-[23px] font-medium text-[#0078ff]">
            자세한 가격 안내
          </a>
          <div className="relative mt-[57px] overflow-hidden rounded-[12px] bg-[#0c151c] pt-[34px] pb-[34px] text-center">
            <Dots id="dots-cta" color="#263747" x={17} y={16} />
            <div className="relative">
              <p className="mb-[30px] text-[18px] leading-[28px] text-white">
                국내 1위 코딩 테스트 솔루션을 첫 30일 동안 무료로 사용해보고
                <br />
                개발자 채용까지의 시간과 비용을 줄이세요.
              </p>
              <Actions first="지금 시작하기" gap="gap-[3px]" />
            </div>
          </div>
        </section>
      </main>

      <footer className="mt-[57px] border-t border-[#d7e2eb] pb-[29px]">
        <div className="mx-auto w-full max-w-[840px] pt-7">
          <h2 className="text-[10px] leading-[14px] font-bold text-[#44576c]">2019 프로그래머스</h2>
          <ul className="mt-[9px] text-[9px] leading-[14px] text-[#98a8b9]">
            {footerLinks.map((l) => <li key={l}><a href="#">{l}</a></li>)}
          </ul>
          <p className="mt-[13px] text-[8px] leading-[12px] whitespace-nowrap text-[#b2c0cc]">
            (주)그렙 / 공동대표 이확영, 임성수 / 서울특별시 강남구 강남대로110길 36, 2층(역삼동) / 사업자등록번호 220-88-75699 / 통신판매업신고 제 2014-서울강남-03241호 / 직업정보제공사업 신고번호 J1200020180027 / 유료직업소개사업 등록번호 (국내)제2010-
            <br />
            3220237-14-5-00020호
            <br />
            ☎ 기업 서비스(코딩 테스트) 및 스쿨 문의: 02-539-1886
          </p>
        </div>
      </footer>

      <div className="pointer-events-none absolute right-0 bottom-0 size-[215px] bg-[radial-gradient(circle_at_bottom_right,rgba(29,39,54,0.05),rgba(29,39,54,0)_70%)]" />
      <button type="button" className="absolute right-[17px] bottom-[17px] flex items-center">
        <span className="h-[41px] rounded-[20px] bg-white pr-[30px] pl-[17px] text-[10px] leading-[40px] font-medium text-black shadow-[0_4px_14px_rgba(0,0,0,0.16)]">기업용 서비스 문의</span>
        <span className="relative -ml-[22px] flex size-[45px] items-center justify-center rounded-full bg-gradient-to-b from-[#4470ff] to-[#5b4bff] shadow-[0_3px_8px_rgba(0,0,0,0.15)]">
          <svg viewBox="0 0 26 26" className="size-[26px]" aria-hidden="true">
            <path d="M13 1a11.500 11.500 0 0 1 11.500 12v10.500q0 1.200-1.200.8L20 23A12 12 0 1 1 13 1z" fill="#fff" />
            <rect x="8.500" y="9.500" width="2.600" height="5.500" rx="1.300" fill="#4f60ff" />
            <rect x="14.900" y="9.500" width="2.600" height="5.500" rx="1.300" fill="#4f60ff" />
          </svg>
        </span>
      </button>
    </div>
  );
}
